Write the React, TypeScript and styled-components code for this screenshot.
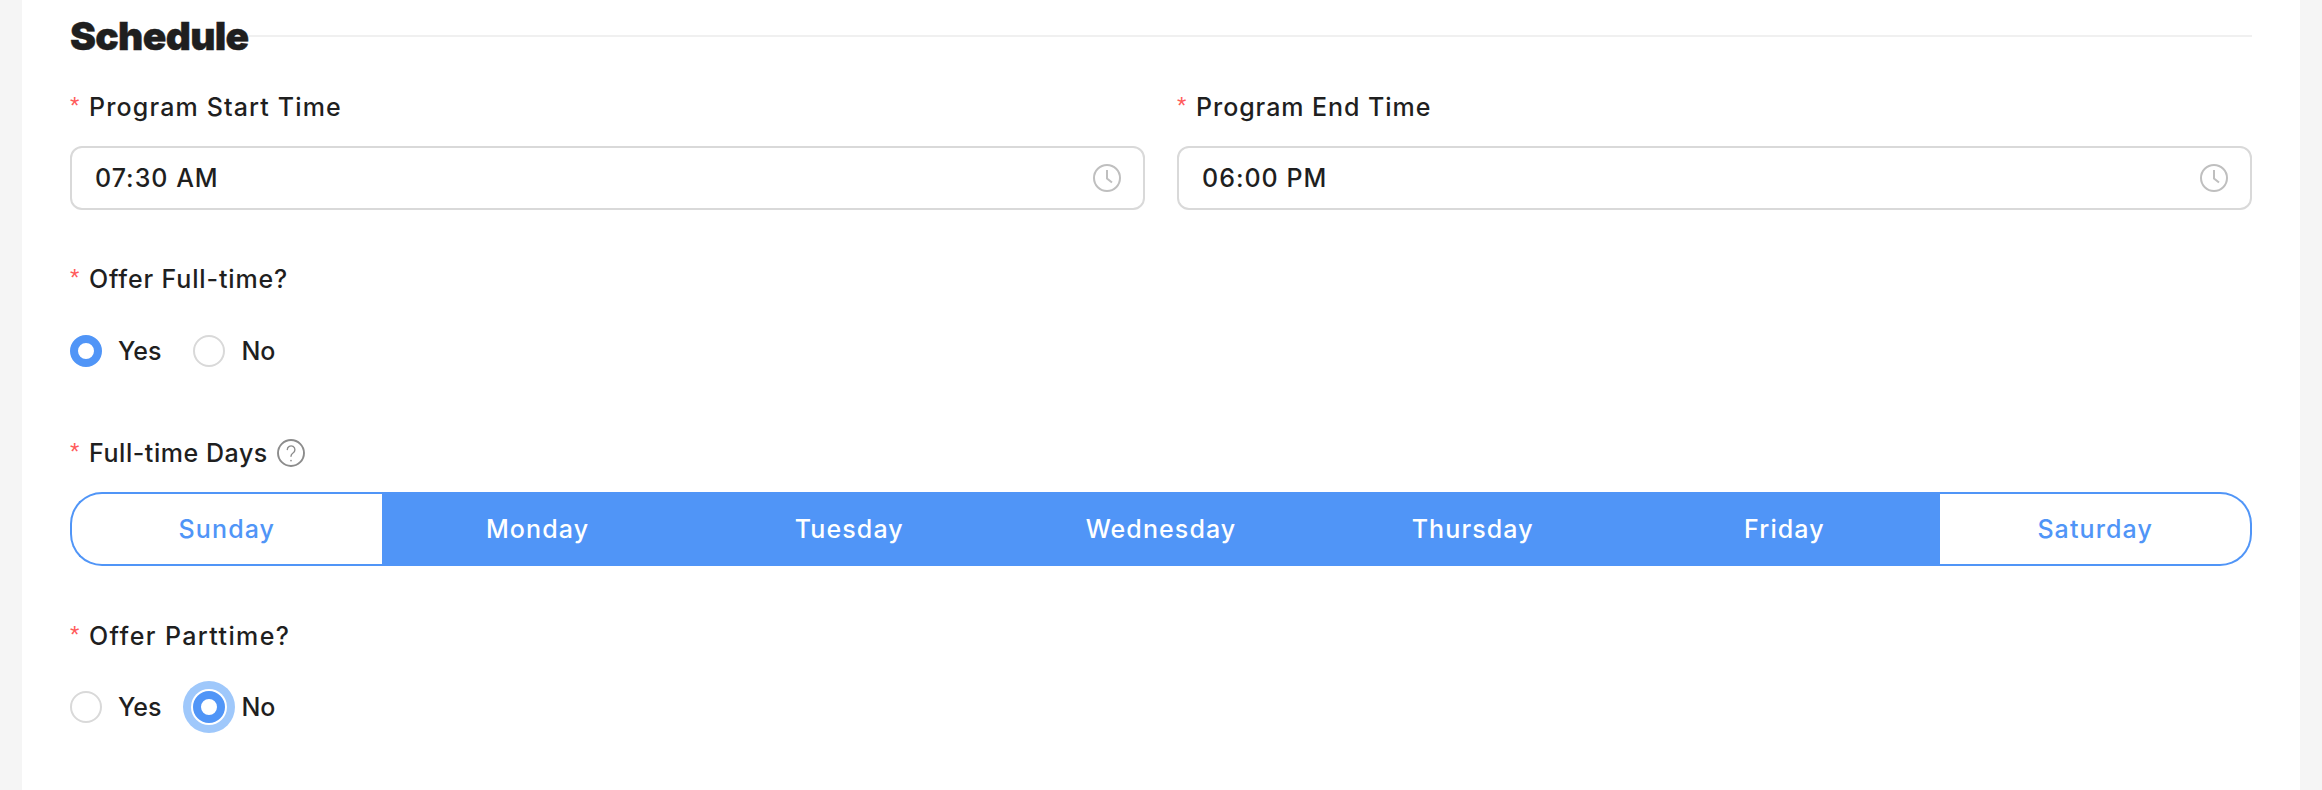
import React from "react";
import styled, { createGlobalStyle } from "styled-components";

const Global = createGlobalStyle`
  html, body { margin: 0; padding: 0; background: #f5f5f5; }
  body { font-family: "Inter", "Liberation Sans", sans-serif; color: #1f1f1f; }
`;

const Page = styled.div`
  width: 2322px;
  height: 790px;
  overflow: hidden;
  padding: 0 22px;
  box-sizing: border-box;
`;

const Card = styled.main`
  height: 790px;
  box-sizing: border-box;
  background: #fff;
  padding: 0 48px;
`;

const SectionHead = styled.header`
  display: flex;
  align-items: center;
  height: 72px;
  margin-bottom: 19px;
`;

const SectionTitle = styled.h2`
  margin: 0;
  font-size: 39px;
  line-height: 44px;
  font-weight: 900;
  color: #1f1f1f;
  letter-spacing: -0.7px;
  -webkit-text-stroke: 0.4px #1f1f1f;
`;

const SectionRule = styled.div`
  flex: 1;
  height: 2px;
  background: #f0f0f0;
`;

const TwoColumns = styled.div`
  display: grid;
  grid-template-columns: 1fr 1fr;
  gap: 32px;
`;

const Label = styled.label<{ $top?: number; $bottom?: number; $track: number }>`
  display: flex;
  align-items: center;
  height: 32px;
  line-height: 32px;
  font-size: 25px;
  font-weight: 500;
  letter-spacing: ${(p) => p.$track}px;
  color: #1f1f1f;
  margin-top: ${(p) => p.$top ?? 0}px;
  margin-bottom: ${(p) => p.$bottom ?? 23}px;
`;

const Required = styled.span`
  width: 19px;
  flex: none;
  color: #ff5a5a;
  font-family: "Liberation Sans", sans-serif;
  font-size: 24px;
  line-height: 32px;
  letter-spacing: 0;
  position: relative;
  top: -1px;
`;

const TimeBox = styled.div`
  display: flex;
  align-items: center;
  justify-content: space-between;
  height: 64px;
  box-sizing: border-box;
  padding: 0 22px 0 23px;
  border: 2px solid #d9d9d9;
  border-radius: 12px;
  background: #fff;
  font-size: 25px;
  letter-spacing: 1px;
  font-weight: 500;
`;

const RadioRow = styled.div`
  display: flex;
  align-items: center;
  height: 32px;
`;

const RadioOption = styled.div`
  display: flex;
  align-items: center;
  font-size: 25px;
  font-weight: 500;
  margin-right: 32px;
`;

const RadioDot = styled.span<{ $checked?: boolean; $focused?: boolean }>`
  display: block;
  width: 32px;
  height: 32px;
  box-sizing: border-box;
  border-radius: 50%;
  background: #fff;
  border: ${(p) => (p.$checked ? "8px solid #5095f7" : "2px solid #d9d9d9")};
  box-shadow: ${(p) => (p.$focused ? "0 0 0 2px #fff, 0 0 0 10px #9fc8fb" : "none")};
  margin-right: 16px;
`;

const Segments = styled.div`
  display: grid;
  grid-template-columns: repeat(7, 1fr);
  height: 74px;
`;

const Segment = styled.div<{ $on?: boolean }>`
  display: flex;
  align-items: center;
  justify-content: center;
  box-sizing: border-box;
  border: 2px solid #5095f7;
  font-size: 25px;
  font-weight: 500;
  letter-spacing: 1.1px;
  color: ${(p) => (p.$on ? "#fff" : "#5095f7")};
  background: ${(p) => (p.$on ? "#5095f7" : "#fff")};

  &:first-child {
    border-right: none;
    border-radius: 32px 0 0 32px;
  }
  &:last-child {
    border-left: none;
    border-radius: 0 32px 32px 0;
  }
`;

const HelpIcon = styled.svg`
  width: 28px;
  height: 28px;
  margin-left: 9px;
  flex: none;
`;

const ClockIcon = styled.svg`
  width: 28px;
  height: 28px;
  flex: none;
`;

const Clock = () => (
  <ClockIcon viewBox="0 0 28 28" fill="none" stroke="#bfbfbf" strokeWidth="2">
    <circle cx="14" cy="14" r="13" />
    <path d="M14 6v8.5l5 4" />
  </ClockIcon>
);

const Help = () => (
  <HelpIcon viewBox="0 0 28 28" fill="none" stroke="#8c8c8c" strokeLinecap="round">
    <circle cx="14" cy="14" r="13" strokeWidth="1.9" />
    <path d="M10.3 10.6a3.8 3.8 0 1 1 5.7 3.4c-1.3.8-2 1.6-2 3.2" strokeWidth="1.4" />
    <path d="M14 21.6v.2" strokeWidth="1.6" />
  </HelpIcon>
);

const days = ["Sunday", "Monday", "Tuesday", "Wednesday", "Thursday", "Friday", "Saturday"];
const selected = new Set(["Monday", "Tuesday", "Wednesday", "Thursday", "Friday"]);

export default function App() {
  return (
    <>
      <Global />
      <Page>
        <Card>
          <SectionHead>
            <SectionTitle>Schedule</SectionTitle>
            <SectionRule />
          </SectionHead>
          <TwoColumns>
            <div>
              <Label $track={1.15}>
                <Required>*</Required>Program Start Time
              </Label>
              <TimeBox>
                07:30 AM
                <Clock />
              </TimeBox>
            </div>
            <div>
              <Label $track={0.95}>
                <Required>*</Required>Program End Time
              </Label>
              <TimeBox>
                06:00 PM
                <Clock />
              </TimeBox>
            </div>
          </TwoColumns>
          <Label $track={0.85} $top={53} $bottom={40}>
            <Required>*</Required>Offer Full-time?
          </Label>
          <RadioRow>
            <RadioOption>
              <RadioDot $checked />
              Yes
            </RadioOption>
            <RadioOption>
              <RadioDot />
              No
            </RadioOption>
          </RadioRow>
          <Label $track={0.55} $top={70}>
            <Required>*</Required>Full-time Days
            <Help />
          </Label>
          <Segments>
            {days.map((d) => (
              <Segment key={d} $on={selected.has(d)}>
                {d}
              </Segment>
            ))}
          </Segments>
          <Label $track={1.4} $top={54} $bottom={39}>
            <Required>*</Required>Offer Parttime?
          </Label>
          <RadioRow>
            <RadioOption>
              <RadioDot />
              Yes
            </RadioOption>
            <RadioOption>
              <RadioDot $checked $focused />
              No
            </RadioOption>
          </RadioRow>
        </Card>
      </Page>
    </>
  );
}
